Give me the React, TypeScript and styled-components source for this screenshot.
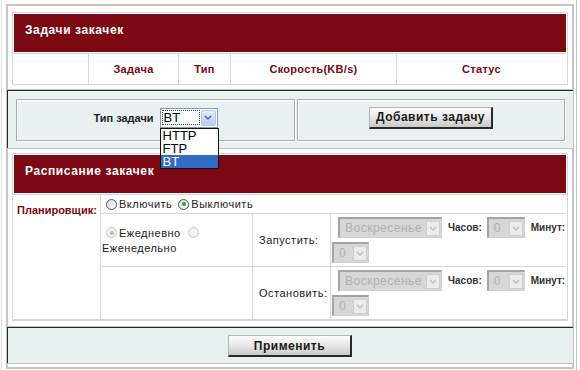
import React from "react";
import styled, { createGlobalStyle, css } from "styled-components";

const RED = "#7b0812";
const LINE = "#d6d6d6";

const GlobalStyle = createGlobalStyle`
  html, body { margin: 0; padding: 0; background: #fff; }
  body {
    font-family: "Liberation Sans", Arial, sans-serif;
    font-size: 11px;
    color: #222;
  }
`;

const Page = styled.div`
  width: 576px;
  height: 370px;
  margin-left: 1px;
  box-sizing: border-box;
  border-left: 1px solid #dedede;
  border-right: 1px solid #c8c8c8;
  padding: 4px 0 0 4px;
`;

const Form = styled.div`
  width: 568px;
`;

const WhiteSection = styled.div<{ $first?: boolean }>`
  background: #fff;
  border: 2px solid #c6c6c6;
  border-top-width: ${(p) => (p.$first ? 2 : 0)}px;
  border-bottom: 0;
  padding: ${(p) => (p.$first ? "6px 4px 4px" : "4px 4px 5px")};
`;

const Footer = styled.div`
  height: 3px;
  border: 2px solid #c6c6c6;
  border-top: 0;
`;

const Panel = styled.div<{ $center?: boolean }>`
  background: #e8f0f0;
  border: 1px solid #c2c2c2;
  box-shadow: inset 1px 1px 0 #2a2a2a;
  display: flex;
  gap: 2px;
  padding: ${(p) => (p.$center ? "8px 0 6px" : "9px 8px 7px 9px")};
  justify-content: ${(p) => (p.$center ? "center" : "flex-start")};
`;

const PanelCell = styled.div<{ $w?: number }>`
  flex: ${(p) => (p.$w ? `0 0 ${p.$w}px` : "1")};
  height: 42px;
  box-sizing: border-box;
  border: 1px solid #a9afaf;
  box-shadow: inset 1px 1px 0 #fff, 1px 1px 0 #fff;
  display: flex;
  align-items: center;
  justify-content: center;
  gap: 6px;
  padding-bottom: 5px;
`;

const DataTable = styled.div`
  border: 1px solid ${LINE};
  padding: 1px 1px 0;
`;

const Caption = styled.div`
  height: 38px;
  box-sizing: border-box;
  background: ${RED};
  color: #fff;
  font-weight: bold;
  font-size: 12px;
  line-height: 14px;
  letter-spacing: 0.6px;
  padding: 9px 0 0 11px;
`;

const HeadRow = styled.div`
  display: grid;
  grid-template-columns: 74px 90px 52px 166px 1fr;
  margin-top: 1px;
  border-top: 1px solid ${LINE};
  height: 30px;
`;

const HeadCell = styled.div<{ $first?: boolean }>`
  display: flex;
  align-items: center;
  justify-content: center;
  border-left: ${(p) => (p.$first ? "0" : `1px solid ${LINE}`)};
  color: ${RED};
  font-weight: bold;
  font-size: 11px;
  letter-spacing: 0.3px;
`;

const BoldLabel = styled.span<{ $size?: number }>`
  font-weight: bold;
  font-size: ${(p) => p.$size ?? 11}px;
  color: #1e1e1e;
`;

const Combo = styled.div`
  position: relative;
  width: 58px;
  height: 20px;
  box-sizing: border-box;
  border: 1px solid #7f9db9;
  background: #fff;
  display: flex;
  align-items: center;
  padding: 1px;
  gap: 1px;
`;

const ComboValue = styled.div`
  flex: 1;
  height: 15px;
  box-sizing: border-box;
  border: 1px dotted #444;
  font-size: 13px;
  line-height: 13px;
  padding-left: 1px;
  color: #000;
`;

const ComboArrow = styled.div`
  width: 15px;
  height: 16px;
  box-sizing: border-box;
  border: 1px solid #b4c8f6;
  border-radius: 2px;
  background: linear-gradient(#e3ecff, #b9cdf9);
  display: flex;
  align-items: center;
  justify-content: center;
`;

const DropList = styled.div`
  position: absolute;
  left: -1px;
  top: 19px;
  width: 59px;
  box-sizing: border-box;
  border: 1px solid #111;
  background: #fff;
  z-index: 5;
`;

const DropItem = styled.div<{ $active?: boolean }>`
  height: 13px;
  line-height: 13px;
  font-size: 13px;
  padding-left: 2px;
  background: ${(p) => (p.$active ? "#316ac5" : "#fff")};
  color: ${(p) => (p.$active ? "#fff" : "#000")};
`;

const Button = styled.button`
  width: 124px;
  height: 22px;
  padding: 0;
  font-family: "Liberation Sans", Arial, sans-serif;
  font-weight: bold;
  font-size: 12px;
  letter-spacing: 0.5px;
  color: #1a1a1a;
  background: linear-gradient(#fefefe, #e4e4e4 55%, #c9c9c9);
  border-style: solid;
  border-width: 1px 2px 2px 1px;
  border-color: #b5b5b5 #2a2a2a #2a2a2a #b5b5b5;
`;

const ScheduleGrid = styled.div`
  display: grid;
  grid-template-columns: 86px 152px 78px 1fr;
  grid-template-rows: 18px 53px 53px;
  margin-top: 1px;
  border-top: 1px solid ${LINE};
  border-bottom: 1px solid ${LINE};
  margin-left: -1px;
  margin-right: -1px;
  padding: 0 1px;
`;

const PlannerLabel = styled.div`
  grid-row: 1 / 4;
  padding: 9px 0 0 3px;
  color: ${RED};
  font-weight: bold;
  font-size: 11px;
`;

const GridCell = styled.div<{ $span?: boolean; $top?: boolean }>`
  grid-column: ${(p) => (p.$span ? "2 / 5" : "auto")};
  border-left: 1px solid ${LINE};
  border-top: ${(p) => (p.$top ? `1px solid ${LINE}` : "0")};
  display: flex;
  align-items: center;
  letter-spacing: 0.5px;
  color: #222;
`;

const RadioLine = styled.div`
  display: flex;
  align-items: center;
  padding-left: 5px;
`;

const Radio = styled.span<{ $checked?: boolean; $disabled?: boolean; $gap?: number }>`
  position: relative;
  display: inline-block;
  flex: 0 0 auto;
  width: 11px;
  height: 11px;
  box-sizing: border-box;
  border-radius: 50%;
  border: 1px solid ${(p) => (p.$disabled ? "#cac8bb" : "#2f5e8f")};
  background: ${(p) => (p.$disabled ? "#f3f3f3" : "linear-gradient(135deg, #d8d8d2, #fff)")};
  margin: 0 2px 0 ${(p) => p.$gap ?? 0}px;
  vertical-align: -1px;
  ${(p) =>
    p.$checked &&
    css`
      &::after {
        content: "";
        position: absolute;
        left: 2.5px;
        top: 2.5px;
        width: 4px;
        height: 4px;
        border-radius: 50%;
        background: ${p.$disabled ? "#b8b8b8" : "#2aa52a"};
      }
    `}
`;

const FreqCell = styled(GridCell)`
  padding-left: 1px;
  line-height: 15px;
`;

const FreqText = styled.div`
  padding-top: 2px;
`;

const WhenLabel = styled(GridCell)`
  padding-left: 6px;
`;

const TimeCell = styled(GridCell)`
  flex-direction: column;
  align-items: flex-start;
  justify-content: center;
  gap: 4px;
  padding-left: 1px;
`;

const TimeLine = styled.div`
  display: flex;
  align-items: center;
  white-space: nowrap;
`;

const LockedSelect = styled.div<{ $w: number; $first?: boolean }>`
  width: ${(p) => p.$w}px;
  height: 21px;
  box-sizing: border-box;
  border-style: solid;
  border-width: 2px 1px 1px 2px;
  border-color: #a4a4a4 #d0d0d0 #d0d0d0 #a4a4a4;
  background: #d7d7d7;
  display: flex;
  align-items: center;
  justify-content: space-between;
  padding: 0 1px 0 5px;
  margin-left: ${(p) => (p.$first ? 6 : 0)}px;
  color: #b0b0b0;
  font-size: 12px;
  letter-spacing: 0.5px;
`;

const LockedArrow = styled.div`
  width: 14px;
  height: 15px;
  box-sizing: border-box;
  border: 1px solid #cfcfcf;
  background: #ececec;
  display: flex;
  align-items: center;
  justify-content: center;
`;

const TimeLabel = styled.span<{ $gap: number }>`
  font-weight: bold;
  font-size: 10px;
  color: #333;
  letter-spacing: 0;
  margin: 0 ${(p) => p.$gap}px 0 6px;
`;

const Chevron = ({ color }: { color: string }) => (
  <svg width="8" height="5" viewBox="0 0 8 5">
    <polyline points="1,1 4,4 7,1" fill="none" stroke={color} strokeWidth="1.4" />
  </svg>
);

const Locked = ({ w, value, first }: { w: number; value: string; first?: boolean }) => (
  <LockedSelect $w={w} $first={first}>
    {value}
    <LockedArrow>
      <Chevron color="#bdbdbd" />
    </LockedArrow>
  </LockedSelect>
);

const TimeRow = () => (
  <>
    <TimeLine>
      <Locked w={104} value="Воскресенье" first />
      <TimeLabel $gap={5}>Часов:</TimeLabel>
      <Locked w={38} value="0" />
      <TimeLabel $gap={0}>Минут:</TimeLabel>
    </TimeLine>
    <TimeLine>
      <Locked w={37} value="0" />
    </TimeLine>
  </>
);

export default function App() {
  const columns = ["", "Задача", "Тип", "Скорость(KB/s)", "Статус"];

  return (
    <>
      <GlobalStyle />
      <Page>
        <Form>
          <WhiteSection $first>
            <DataTable>
              <Caption>Задачи закачек</Caption>
              <HeadRow>
                {columns.map((c, i) => (
                  <HeadCell key={i} $first={i === 0}>
                    {c}
                  </HeadCell>
                ))}
              </HeadRow>
            </DataTable>
          </WhiteSection>

          <Panel>
            <PanelCell $w={279}>
              <BoldLabel>Тип задачи</BoldLabel>
              <Combo>
                <ComboValue>BT</ComboValue>
                <ComboArrow>
                  <Chevron color="#4d6185" />
                </ComboArrow>
                <DropList>
                  <DropItem>HTTP</DropItem>
                  <DropItem>FTP</DropItem>
                  <DropItem $active>BT</DropItem>
                </DropList>
              </Combo>
            </PanelCell>
            <PanelCell>
              <Button>Добавить задачу</Button>
            </PanelCell>
          </Panel>

          <WhiteSection>
            <DataTable>
              <Caption>Расписание закачек</Caption>
              <ScheduleGrid>
                <PlannerLabel>Планировщик:</PlannerLabel>
                <GridCell $span>
                  <RadioLine>
                    <Radio />
                    Включить
                    <Radio $checked $gap={6} />
                    Выключить
                  </RadioLine>
                </GridCell>

                <FreqCell $top>
                  <FreqText>
                    <Radio $checked $disabled $gap={4} />
                    Ежедневно <Radio $disabled $gap={4} /> Еженедельно
                  </FreqText>
                </FreqCell>
                <WhenLabel $top>Запустить:</WhenLabel>
                <TimeCell $top>
                  <TimeRow />
                </TimeCell>

                <GridCell $top />
                <WhenLabel $top>Остановить:</WhenLabel>
                <TimeCell $top>
                  <TimeRow />
                </TimeCell>
              </ScheduleGrid>
            </DataTable>
          </WhiteSection>

          <Panel $center>
            <Button>Применить</Button>
          </Panel>
          <Footer />
        </Form>
      </Page>
    </>
  );
}
